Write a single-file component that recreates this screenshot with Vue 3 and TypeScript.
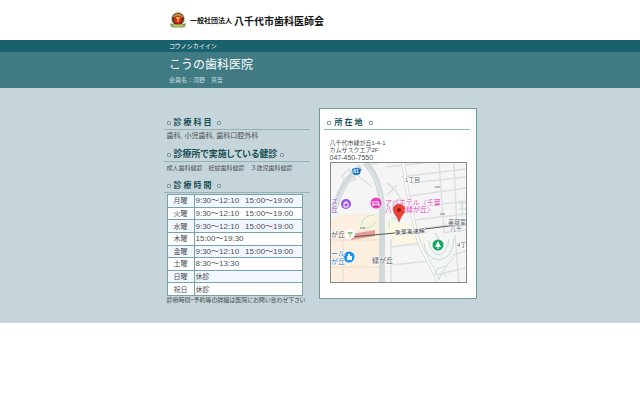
<script setup lang="ts">
interface Hours {
  day: string
  slots: string[]
}

const hours: Hours[] = [
  { day: '月曜', slots: ['9:30〜12:10', '15:00〜19:00'] },
  { day: '火曜', slots: ['9:30〜12:10', '15:00〜19:00'] },
  { day: '水曜', slots: ['9:30〜12:10', '15:00〜19:00'] },
  { day: '木曜', slots: ['15:00〜19:30'] },
  { day: '金曜', slots: ['9:30〜12:10', '15:00〜19:00'] },
  { day: '土曜', slots: ['8:30〜13:30'] },
  { day: '日曜', slots: [] },
  { day: '祝日', slots: [] },
]
const checkups: string[] = ['成人歯科健診', '妊婦歯科健診', '３歳児歯科健診']
</script>

<template>
  <div class="page">
    <header class="site">
      <div class="inner brand">
        <svg class="emblem" viewBox="0 0 18 18" aria-hidden="true">
          <circle cx="9" cy="8" r="7" fill="#c3bf9d" />
          <circle cx="9" cy="8" r="6" fill="#54301c" />
          <path d="M4 5.5Q9 0 14 5.5L12 7Q9 4 6 7Z" fill="#c9a24b" />
          <circle cx="9" cy="8.500" r="4" fill="#d8281c" />
          <path d="M7 6h4v1.500H9.800v3H8.200v-3H7Z" fill="#f3c34c" />
          <path d="M1 12Q5 14 9 13Q13 14 17 12L16 16Q9 17 2 16Z" fill="#8d9a48" />
          <path d="M4 14.500Q9 15.500 14 14.500" fill="none" stroke="#e0d27c" stroke-width="1" />
        </svg>
        <span class="kind">一般社団法人</span>
        <span class="name">八千代市歯科医師会</span>
      </div>
    </header>

    <div class="kana"><p class="inner">コウノシカイイン</p></div>
    <div class="title">
      <div class="inner">
        <h1>こうの歯科医院</h1>
        <p>会員名：河野　真吾</p>
      </div>
    </div>

    <main>
      <div class="columns">
        <div class="info">
          <section>
            <h2 class="spaced"><i></i>診療科目<i></i></h2>
            <p class="subjects">歯科, 小児歯科, 歯科口腔外科</p>
          </section>
          <section>
            <h2 class="long"><i></i>診療所で実施している健診<i></i></h2>
            <p class="checkups"><span v-for="c in checkups" :key="c">{{ c }}</span></p>
          </section>
          <section>
            <h2 class="spaced"><i></i>診療時間<i></i></h2>
            <table>
              <tbody>
                <tr v-for="h in hours" :key="h.day">
                  <th scope="row">{{ h.day }}</th>
                  <td v-if="h.slots.length">
                    <span v-for="s in h.slots" :key="s" class="slot">{{ s }}</span>
                  </td>
                  <td v-else class="closed">休診</td>
                </tr>
              </tbody>
            </table>
            <p class="note">診療時間・予約等の詳細は医院にお問い合わせ下さい</p>
          </section>
        </div>

        <section class="card">
          <h2 class="spaced"><i></i>所在地<i></i></h2>
          <address>
            八千代市緑が丘1-4-1<br />
            カムザスクエア2F<br />
            <span class="phone">047-450-7550</span>
          </address>
          <svg class="map" viewBox="0 0 135 119" role="img" aria-label="地図">
            <rect width="135" height="119" fill="#f5f5f5" />
            <path d="M0 58L12 52L28 50L50 52V119H0Z" fill="#fcefdf" />
            <path d="M55 56L64 60L88 62L90 68L93 82L62 80L55 70Z" fill="#fcf7e2" />
            <path d="M28 54L48 50V66H24Z" fill="#f7f3dc" />
            <g fill="none" stroke="#dcdfe1" stroke-width="1.500">
              <path d="M56 4L135 -5M70 14L135 6M80 20L135 14M79 33L135 25M80 45L135 38M83 57L135 51M85 66L135 60" />
              <path d="M108 0L113 69M123 0L126 66M56 20Q66 26 70 38M56 32L66 22" />
              <path d="M60 76V119M60 102L98 98M60 84L90 80M104 70L108 76M112 70L135 67M124 72L128 119M122 92L135 88M104 112L135 105" />
              <path d="M11 13L18 6L25 16L14 20ZM26 12L41 24M34 2L48 0" />
              <path d="M0 77H48M12 78V119M0 104H48" stroke="#f1e3cf" />
            </g>
            <path d="M72 0L76 26L82 56L88 80L108 119" fill="none" stroke="#dadddf" stroke-width="4" />
            <path d="M72 0L76 26L82 56L88 80L108 119" fill="none" stroke="#f9fafa" stroke-width="2" />
            <path d="M3 48Q10 18 30 4M34 0Q48 12 51 42V119" fill="none" stroke="#d3dadd" stroke-width="6" />
            <path d="M4 46Q12 20 30 6M35 2Q48 16 51 42" fill="none" stroke="#e6ebec" stroke-width="1" />
            <g fill="none" stroke="#c4dfd1" stroke-width="1">
              <path d="M93 80Q94 95 108 97Q122 95 123 76M98 78Q99 90 108 92Q116 90 118 76M107 117L117 101L123 94M115 103L106 106L104 112M110 108L116 114" />
              <path d="M30 62Q32 52 44 52M32 65Q42 66 45 58M58 57V66M60 55H66" />
              <path d="M128 40H135M128 46H135M131 38V54" />
            </g>
            <path d="M20 71L44 67V73L20 77Z" fill="#e99c97" />
            <path d="M20 74L64 70M94 66L118 63L135 62" fill="none" stroke="#545557" stroke-width="1" />
            <path d="M29 65H34M104 24H109M109 51H114" stroke="#7b8086" stroke-width="1" />

            <path d="M21 6Q25 4 30 6L29 11Q25 13 22 11Z" fill="#1471bd" />
            <text x="25" y="10" class="route">61</text>
            <circle cx="15" cy="41" r="5" fill="#9b53e8" />
            <path d="M13 40h4v4h-4ZM14 40Q15 37 16 40" fill="#9b53e8" stroke="#fff" stroke-width="1" />
            <circle cx="45" cy="40" r="5.500" fill="#ee3fbc" />
            <path d="M42 38v5M42 41.500h6V43M43.500 39h4v2" fill="none" stroke="#fff" stroke-width="1" />
            <circle cx="19" cy="71" r="5" fill="#fff" />
            <text x="19" y="74" class="station">〒</text>
            <circle cx="18" cy="94" r="5.500" fill="#1695ed" />
            <path d="M16 93h5v4h-5ZM17 93v-2h2v2" fill="#fff" />
            <circle cx="107" cy="82" r="5.500" fill="#16a663" />
            <path d="M107 78L104 84H106.500V86H107.500V84H110Z" fill="#fff" />

            <g class="label">
              <text x="74" y="19" class="small">1丁目</text>
              <text x="54" y="42" class="pink">アパホテル〈千葉</text>
              <text x="54" y="49" class="pink">八千代緑が丘〉</text>
              <text x="0" y="41" class="purple">ズ</text>
              <text x="0" y="49" class="purple">丘</text>
              <text x="0" y="74" class="place">が丘</text>
              <text x="0" y="93" class="blue">ール</text>
              <text x="0" y="101" class="blue">が丘</text>
              <text x="41" y="100" class="place">緑が丘</text>
              <text x="64" y="72" class="rail" transform="rotate(-4 64 72)">東葉高速線</text>
              <text x="117" y="61" class="small">美容室</text>
              <text x="119" y="68" class="small">八千</text>
              <text x="126" y="84" class="small">4丁</text>
            </g>
            <path d="M68 59Q66 53 63 50Q60 42 68 41Q76 42 73 50Q70 53 68 59Z" fill="#ea4336" stroke="#c52b24" stroke-width=".5" />
            <circle cx="68" cy="47" r="2" fill="#8c1f1b" />
          </svg>
        </section>
      </div>
    </main>
  </div>
</template>

<style>
body {
  margin: 0;
  background: #fff;
}
</style>

<style scoped>
.page {
  font-family: "Liberation Sans", "Noto Sans CJK JP", sans-serif;
  color: #4b5054;
}
h1, h2, p {
  margin: 0;
  font-weight: 400;
}
.inner {
  max-width: 302px;
  margin: 0 auto;
}
.site {
  padding: 10px 0;
}
.brand {
  display: flex;
  align-items: center;
  height: 20px;
  color: #151515;
  white-space: nowrap;
}
.emblem {
  width: 18px;
  height: 18px;
  margin-right: 3px;
}
.kind {
  font-size: 7px;
  font-weight: 700;
  margin-right: 2px;
}
.name {
  font-size: 10px;
  font-weight: 700;
}
.kana {
  background: #19616c;
  color: #fff;
  font-size: 6px;
  font-weight: 700;
  line-height: 12px;
}
.title {
  background: #407b84;
  color: #fff;
  padding: 4px 0 2px;
}
.title h1 {
  font-size: 12px;
  line-height: 18px;
}
.title p {
  font-size: 6px;
  line-height: 12px;
  color: #cadadd;
}
main {
  background: #c5d5d9;
  padding: 20px 0 19px;
}
.columns {
  display: flex;
  align-items: flex-start;
  justify-content: space-between;
  max-width: 313px;
  margin: 0 auto;
}
.info {
  width: 146px;
  padding-top: 8px;
}
h2 {
  display: flex;
  align-items: center;
  gap: 3px;
  padding-left: 3px;
  border-bottom: 1px solid #94b5b7;
  color: #175057;
  font-size: 8px;
  font-weight: 700;
  line-height: 13px;
  white-space: nowrap;
}
h2 i {
  box-sizing: border-box;
  width: 4px;
  height: 4px;
  border: 1px solid #7b9da2;
  border-radius: 1px;
}
.spaced {
  letter-spacing: 2px;
}
.long {
  font-size: 9px;
  font-feature-settings: "palt";
}
.subjects {
  padding: 0 3px 6px;
  font-size: 7px;
  line-height: 12px;
}
.checkups {
  display: flex;
  gap: 6px;
  padding: 0 3px 4px;
  font-size: 6px;
  line-height: 13px;
  white-space: nowrap;
}
table {
  width: 136px;
  height: 102px;
  margin: 1px 0 0 3px;
  border-collapse: collapse;
  background: #fff;
}
th, td {
  padding: 0;
  border: 1px solid #76a4a7;
  line-height: 11px;
  white-space: nowrap;
}
th {
  width: 26px;
  font-size: 7px;
  font-weight: 400;
  text-align: center;
}
td {
  padding-left: 1px;
  font-size: 8px;
}
.slot + .slot {
  margin-left: 6px;
}
.closed {
  font-size: 7px;
}
tr:nth-child(odd) {
  background: #f1f6ff;
}
.note {
  padding-left: 3px;
  font-size: 6px;
  line-height: 8px;
  font-feature-settings: "palt";
  white-space: nowrap;
}
.card {
  box-sizing: border-box;
  width: 158px;
  padding: 7px 6px 15px 4px;
  border: 1px solid #6f9c9f;
  background: #fff;
}
.card h2 {
  gap: 4px;
}
address {
  padding: 10px 6px 0;
  font-size: 6px;
  font-style: normal;
  line-height: 7px;
}
.phone {
  font-size: 7px;
}
.map {
  display: block;
  box-sizing: border-box;
  width: 137px;
  height: 121px;
  margin-left: 6px;
  border: 1px solid #858988;
}
.label {
  stroke: #fff;
  stroke-width: 1px;
  paint-order: stroke;
}
.route {
  font-size: 5px;
  font-weight: 700;
  fill: #fff;
  text-anchor: middle;
}
.station {
  font-size: 7px;
  font-weight: 700;
  fill: #79ba68;
  text-anchor: middle;
}
.small {
  font-size: 6px;
  fill: #63686d;
}
.place {
  font-size: 7px;
  fill: #54585c;
}
.rail {
  font-size: 6px;
  fill: #414245;
}
.pink {
  font-size: 7px;
  fill: #df3bb1;
}
.purple {
  font-size: 7px;
  fill: #8a4fce;
}
.blue {
  font-size: 7px;
  fill: #3182c4;
}
</style>
